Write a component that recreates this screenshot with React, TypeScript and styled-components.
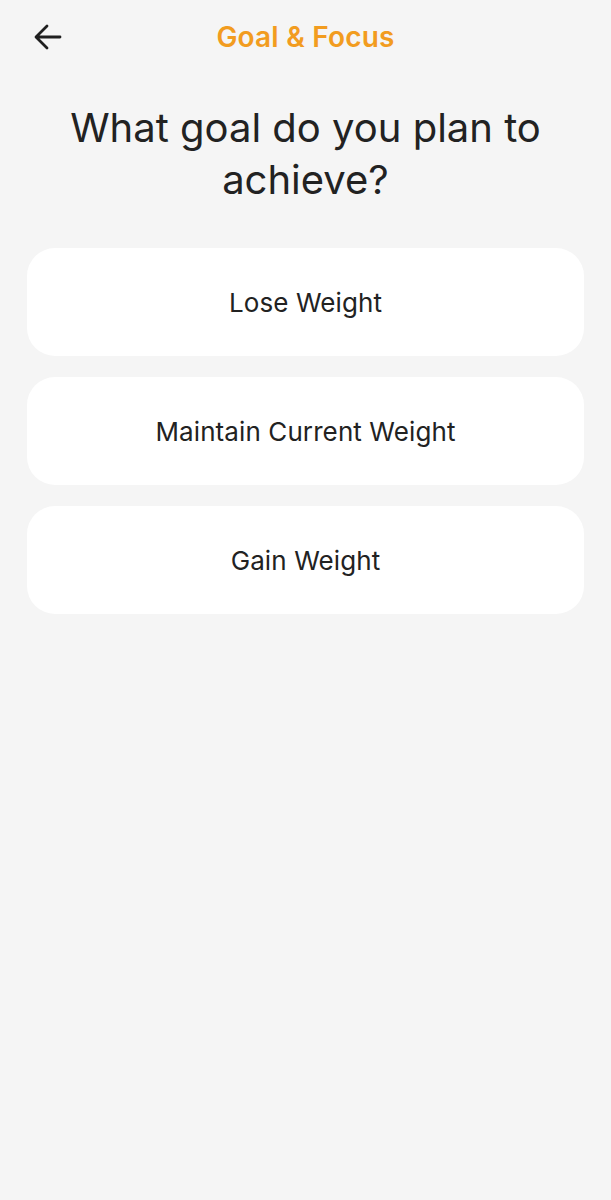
import * as React from "react";
import styled, { createGlobalStyle } from "styled-components";

const GlobalStyle = createGlobalStyle`
  html, body {
    margin: 0;
    padding: 0;
    background: #f5f5f5;
  }
  body {
    font-family: Inter, "Noto Sans", "Liberation Sans", sans-serif;
    color: #222222;
  }
`;

const Page = styled("div")`
  min-height: 1200px;
  background: #f5f5f5;
  box-sizing: border-box;
  padding: 0 27px;
`;

const Header = styled("header")`
  height: 74px;
  display: grid;
  grid-template-columns: 48px 1fr 48px;
  align-items: center;
`;

const BackButton = styled("button")`
  width: 48px;
  height: 48px;
  padding: 0 0 0 7px;
  border: none;
  background: none;
  display: flex;
  align-items: center;
  cursor: pointer;
`;

const Title = styled("h1")`
  margin: 0;
  text-align: center;
  font-size: 28px;
  font-weight: 600;
  color: #f29c1f;
  letter-spacing: 0.2px;
`;

const Question = styled("h2")`
  margin: 28px 0 42px;
  text-align: center;
  font-size: 40px;
  line-height: 52px;
  font-weight: 400;
  color: #222222;
`;

const Options = styled("div")`
  display: flex;
  flex-direction: column;
  gap: 21px;
`;

const Option = styled("button")`
  height: 108px;
  border: none;
  border-radius: 28px;
  background: #ffffff;
  font-family: inherit;
  font-size: 26px;
  letter-spacing: 0.1px;
  color: #222222;
  cursor: pointer;
`;

const goals = ["Lose Weight", "Maintain Current Weight", "Gain Weight"];

function ArrowLeft(): JSX.Element {
  return (
    <svg width="28" height="26" viewBox="0 0 28 26" fill="none">
      <path
        d="M26 13H3M13 2L2 13l11 11"
        stroke="#1f1f1f"
        strokeWidth="2.8"
        strokeLinecap="round"
        strokeLinejoin="round"
      />
    </svg>
  );
}

export default function App(): JSX.Element {
  return (
    <Page>
      <GlobalStyle />
      <Header>
        <BackButton aria-label="Back">
          <ArrowLeft />
        </BackButton>
        <Title>Goal &amp; Focus</Title>
        <span />
      </Header>
      <Question>
        What goal do you plan to
        <br />
        achieve?
      </Question>
      <Options>
        {goals.map((g) => (
          <Option key={g}>{g}</Option>
        ))}
      </Options>
    </Page>
  );
}
